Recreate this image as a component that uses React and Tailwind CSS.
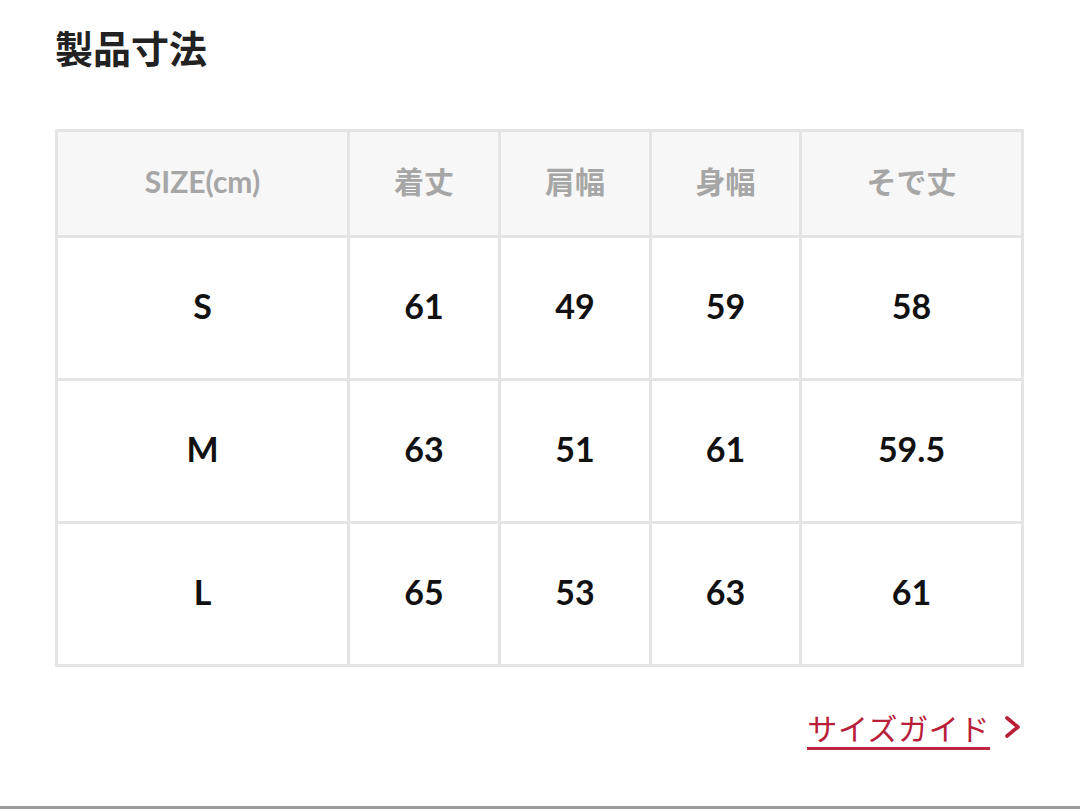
const jp = { fontFamily: '"Noto Sans CJK JP", sans-serif' };
const lato = { fontFamily: 'Lato, "Noto Sans CJK JP", sans-serif' };

const headers = ["SIZE(cm)", "着丈", "肩幅", "身幅", "そで丈"];
const rows = [
  ["S", "61", "49", "59", "58"],
  ["M", "63", "51", "61", "59.5"],
  ["L", "65", "53", "63", "61"],
];

export default function App() {
  return (
    <div className="flex h-[809px] w-[1080px] flex-col bg-white">
      <div className="flex-1 px-[55px] pt-[23px]">
        <h1 className="text-[38px] font-bold leading-[48px] text-[#222]" style={jp}>
          製品寸法
        </h1>

        <div
          className="mt-[58px] grid w-[969px] grid-cols-[289px_148px_148px_147px_219px] gap-[3px] bg-[#e4e4e4] p-[3px]"
          style={lato}
        >
          {headers.map((h) => (
            <div
              key={h}
              className="flex h-[103px] items-center justify-center bg-[#f7f7f7] pb-[4px] text-[30px] font-bold text-[#a6a6a6]"
            >
              {h}
            </div>
          ))}
          {rows.map((row) =>
            row.map((cell, i) => (
              <div
                key={row[0] + i}
                className="flex h-[140px] items-center justify-center bg-white pb-[6px] text-[34px] font-bold text-[#111]"
              >
                {cell}
              </div>
            ))
          )}
        </div>

        <div className="mt-[42px] flex items-center justify-end pr-[3px]">
          <span
            className="border-b-[3px] border-[#c02640] pb-[2px] text-[30px] leading-[36px] tracking-[0.6px] text-[#b8203a]"
            style={jp}
          >
            サイズガイド
          </span>
          <svg className="ml-[14px] mb-[6px]" width="18" height="26" viewBox="0 0 18 26" fill="none">
            <polyline
              points="3,4 14,13 3,22"
              stroke="#b8203a"
              strokeWidth="3.6"
              strokeLinecap="round"
              strokeLinejoin="round"
            />
          </svg>
        </div>
      </div>
      <div className="h-[3px] w-full bg-[#9a9a9a]" />
    </div>
  );
}
